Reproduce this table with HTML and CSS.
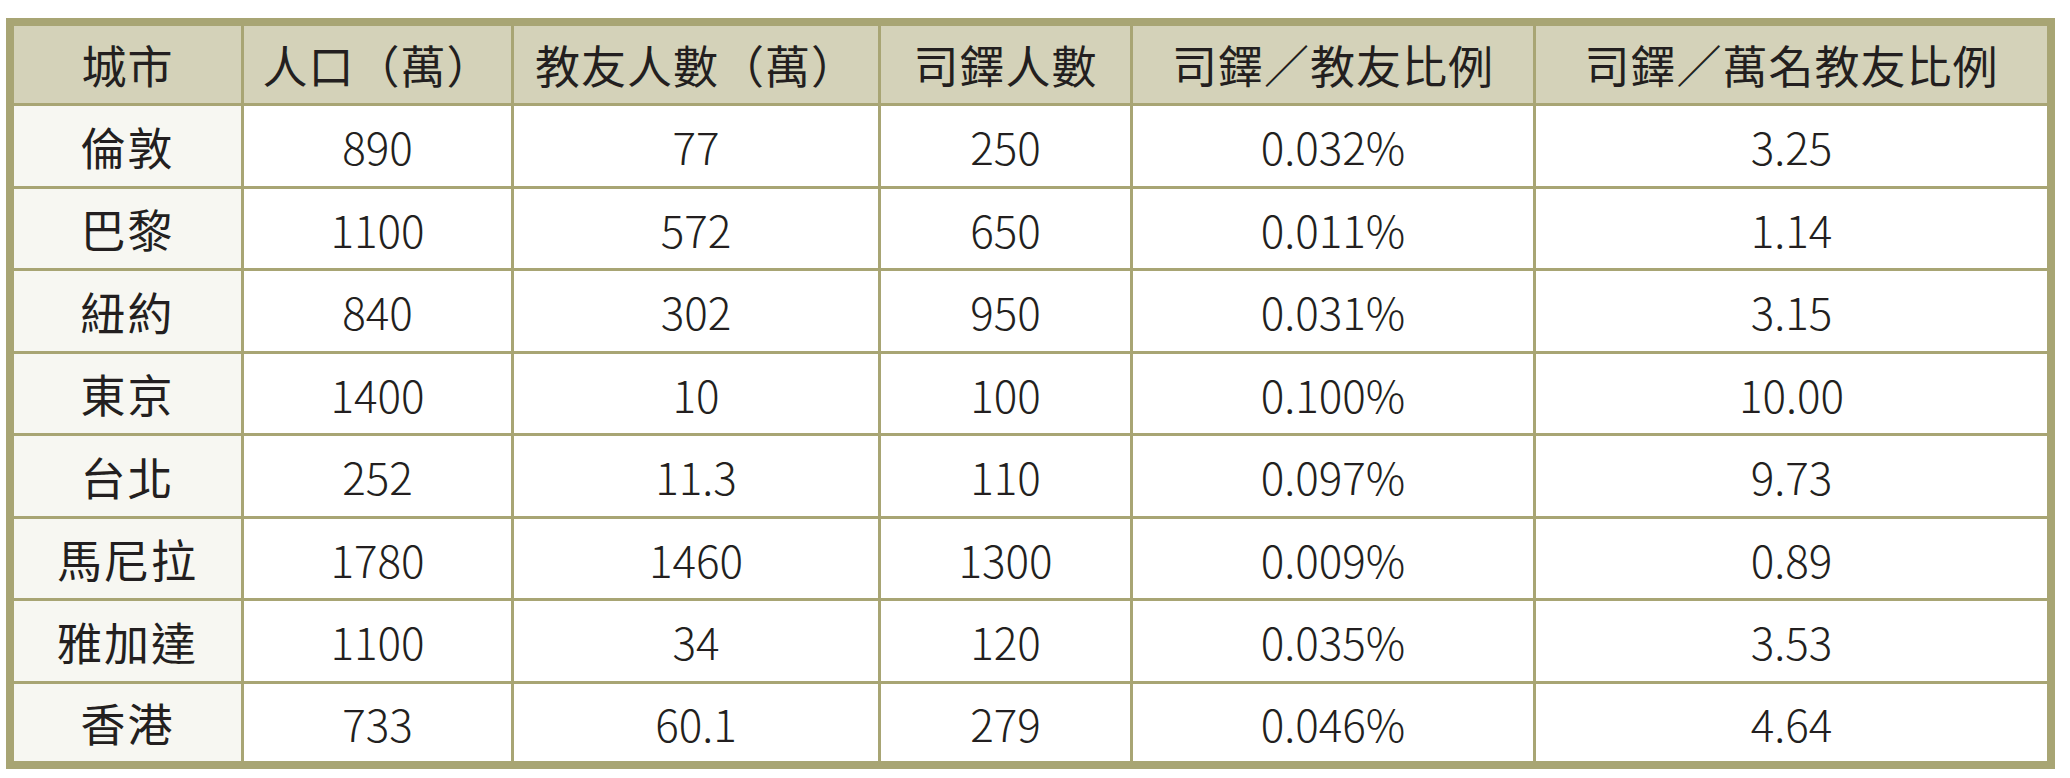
FILE: index.html
```html
<!DOCTYPE html>
<html lang="zh-Hant">
<head>
<meta charset="utf-8">
<title>司鐸與教友比例</title>
<link rel="stylesheet" href="styles.css">
</head>
<body>
<table class="stats">
  <thead>
    <tr>
      <th class="c1">城市</th>
      <th class="c2">人口（萬）</th>
      <th class="c3">教友人數（萬）</th>
      <th class="c4">司鐸人數</th>
      <th class="c5">司鐸／教友比例</th>
      <th class="c6">司鐸／萬名教友比例</th>
    </tr>
  </thead>
  <tbody>
    <tr><td class="city">倫敦</td><td>890</td><td>77</td><td>250</td><td>0.032%</td><td>3.25</td></tr>
    <tr><td class="city">巴黎</td><td>1100</td><td>572</td><td>650</td><td>0.011%</td><td>1.14</td></tr>
    <tr><td class="city">紐約</td><td>840</td><td>302</td><td>950</td><td>0.031%</td><td>3.15</td></tr>
    <tr><td class="city">東京</td><td>1400</td><td>10</td><td>100</td><td>0.100%</td><td>10.00</td></tr>
    <tr><td class="city">台北</td><td>252</td><td>11.3</td><td>110</td><td>0.097%</td><td>9.73</td></tr>
    <tr><td class="city">馬尼拉</td><td>1780</td><td>1460</td><td>1300</td><td>0.009%</td><td>0.89</td></tr>
    <tr><td class="city">雅加達</td><td>1100</td><td>34</td><td>120</td><td>0.035%</td><td>3.53</td></tr>
    <tr><td class="city">香港</td><td>733</td><td>60.1</td><td>279</td><td>0.046%</td><td>4.64</td></tr>
  </tbody>
</table>
</body>
</html>
```
FILE: styles.css
```css
html, body {
  margin: 0;
  padding: 0;
  background: #ffffff;
}

.stats {
  margin: 18px 0 0 6px;
  width: 2049px;
  table-layout: fixed;
  border-collapse: separate;
  border-spacing: 0;
  border: 8px solid #a8a574;
  font-family: "Noto Sans CJK TC", "Noto Sans", sans-serif;
  font-size: 44px;
  font-weight: 300;
  color: #231f20;
  line-height: 1;
}

.stats th,
.stats td {
  box-sizing: border-box;
  padding: 0;
  text-align: center;
  vertical-align: middle;
  border-right: 3px solid #a8a574;
  border-bottom: 3px solid #a8a574;
  background: #ffffff;
}

.stats th:last-child,
.stats td:last-child {
  border-right: none;
}

.stats th {
  height: 80px;
  background: #d4d2b9;
  font-size: 45px;
  font-weight: 400;
  letter-spacing: 1px;
}

.stats tbody tr:nth-child(odd) td { height: 83px; }
.stats tbody tr:nth-child(even) td { height: 82px; }
.stats tbody tr:last-child td {
  height: 77px;
  border-bottom: none;
}

.stats td.city {
  background: #f7f7f2;
  font-size: 45px;
  font-weight: 400;
  letter-spacing: 2px;
}

.c1 { width: 230px; }
.c2 { width: 270px; }
.c3 { width: 367px; }
.c4 { width: 252px; }
.c5 { width: 403px; }
.c6 { width: 511px; }
```
